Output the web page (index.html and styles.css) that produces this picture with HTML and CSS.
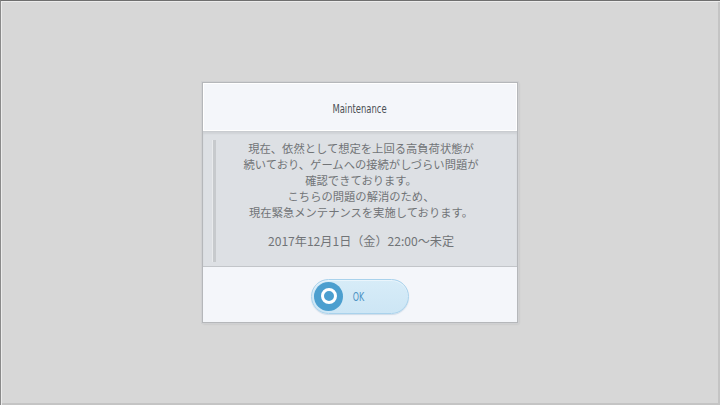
FILE: index.html
```html
<!DOCTYPE html>
<html lang="ja">
<head>
<meta charset="utf-8">
<link rel="stylesheet" href="styles.css">
</head>
<body>
<div class="screen">
  <div class="dialog">
    <div class="header"><span class="title">Maintenance</span></div>
    <div class="body">
      <div class="scrollbar"></div>
      <div class="message">
        <p>現在、依然として想定を上回る高負荷状態が<br>続いており、ゲームへの接続がしづらい問題が<br>確認できております。<br>こちらの問題の解消のため、<br>現在緊急メンテナンスを実施しております。</p>
        <p class="date">2017年12月1日（金）22:00～未定</p>
      </div>
    </div>
    <div class="footer">
      <div class="ok-button">
        <span class="ok-icon"><span class="ok-ring"></span></span>
        <span class="ok-label">OK</span>
      </div>
    </div>
  </div>
</div>
</body>
</html>
```
FILE: styles.css
```css
html, body {
  margin: 0;
  padding: 0;
  width: 720px;
  height: 405px;
  overflow: hidden;
}
.screen {
  box-sizing: border-box;
  width: 720px;
  height: 405px;
  background: #d7d7d7;
  border-top: 1px solid #6f6f6f;
  border-left: 1px solid #8a8a8a;
  box-shadow: inset 1px 1px 0 #ececec, inset -2px -2px 0 #c4c4c4;
  display: flex;
  align-items: flex-start;
  justify-content: center;
  padding-top: 81px;
  padding-right: 2px;
}
.dialog {
  width: 316px;
  height: 241px;
  box-sizing: border-box;
  border: 1px solid #b5b7ba;
  box-shadow: 0 0 0 1px #cfd0d2, 1px 1px 2px rgba(0,0,0,0.12);
  background: #f4f6fa;
  display: flex;
  flex-direction: column;
  font-family: "Noto Sans CJK JP", "Noto Sans", sans-serif;
}
.header {
  height: 48px;
  border: 1px solid #ffffff;
  box-sizing: border-box;
  display: flex;
  align-items: center;
  justify-content: center;
}
.title {
  font-family: "DejaVu Sans Condensed", "Liberation Sans Narrow", sans-serif;
  font-size: 13px;
  color: #4a4f54;
  display: inline-block;
  transform: scaleX(0.72);
  padding-top: 2px;
  padding-left: 1px;
}
.body {
  height: 136px;
  background: #dde0e4;
  border-top: 1px solid #c9ccd0;
  border-bottom: 1px solid #c2c5c9;
  box-shadow: inset 0 2px 2px rgba(0,0,0,0.06);
  box-sizing: border-box;
  display: flex;
  padding: 8px 0 4px 9px;
}
.scrollbar {
  width: 3px;
  background: #c7cacd;
  border-left: 1px solid #e8eaec;
  flex: none;
}
.message {
  flex: 1;
  text-align: center;
  color: #717477;
  font-size: 11.3px;
  line-height: 15.9px;
  padding-right: 10px;
  padding-top: 1px;
}
.message p {
  margin: 0;
}
.message p.date {
  margin-top: 12px;
  font-size: 12.1px;
}
.footer {
  flex: 1;
  display: flex;
  align-items: center;
  justify-content: center;
  padding-left: 1px;
  padding-top: 3px;
}
.ok-button {
  width: 98px;
  height: 35px;
  box-sizing: border-box;
  border-radius: 18px;
  background: linear-gradient(#d7ecf8, #cde6f5);
  border: 1px solid #a9d2ec;
  box-shadow: inset 0 1px 0 #eaf5fc, 0 1px 1px rgba(90,140,180,0.25);
  display: flex;
  align-items: center;
  padding-left: 2px;
}
.ok-icon {
  width: 29px;
  height: 29px;
  border-radius: 50%;
  background: #4c9fcf;
  display: flex;
  align-items: center;
  justify-content: center;
  flex: none;
}
.ok-ring {
  width: 10px;
  height: 10px;
  border-radius: 50%;
  background: #4c9fcf;
  border: 3px solid #ffffff;
}
.ok-label {
  font-family: "DejaVu Sans Condensed", "Liberation Sans Narrow", sans-serif;
  font-size: 13px;
  color: #4d93c4;
  display: inline-block;
  transform: scaleX(0.68);
  margin-left: 7px;
}
```
